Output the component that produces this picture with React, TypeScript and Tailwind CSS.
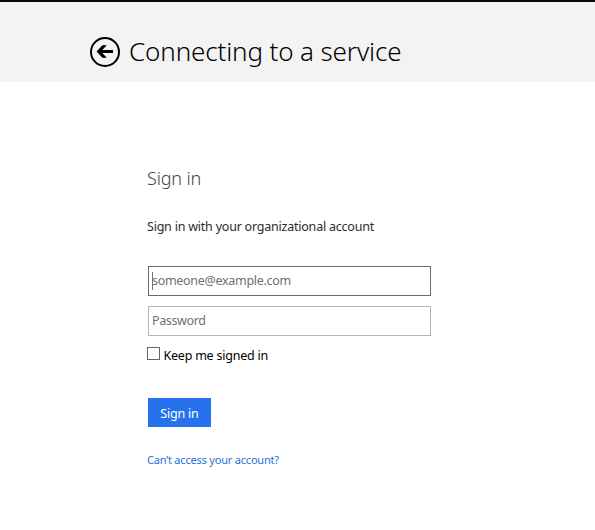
import { useState } from "react";

function BackIcon() {
  return (
    <svg width="30" height="30" viewBox="0 0 30 30" fill="none" aria-hidden="true">
      <circle cx="15" cy="15" r="14" stroke="#000" strokeWidth="2" />
      <path d="M6.6 14.5 L12.4 8.2 H16.8 L12.3 13 H23 V16 H12.3 L16.8 20.8 H12.4 Z" fill="#000" />
    </svg>
  );
}

export default function App() {
  const [keep, setKeep] = useState(false);
  return (
    <div className="h-[530px] w-full overflow-hidden bg-white font-['Noto_Sans','Open_Sans',sans-serif] text-[13px] text-black">
      <header className="flex h-[82px] items-start border-t-2 border-[#0d0a0b] bg-[#f3f3f3] pt-[30px] pl-[90px]">
        <button type="button" aria-label="Back" className="mt-[5px] h-[30px] w-[30px]">
          <BackIcon />
        </button>
        <h1 className="ml-[9px] text-[26px] leading-[38px] font-light tracking-[-0.13px] whitespace-nowrap">
          Connecting to a service
        </h1>
      </header>

      <main className="ml-[147px] flex w-[284px] flex-col items-start pt-[83px]">
        <h2 className="text-[18px] leading-[26px] font-light tracking-[-0.15px] text-[#444]">Sign in</h2>
        <p className="mt-[26px] text-[12.5px] leading-5 tracking-[-0.22px] whitespace-nowrap text-[#2b2b2b]">
          Sign in with your organizational account
        </p>
        <div className="mt-[29px] ml-px flex h-[30px] w-[283px] items-center border border-[#6b6b6b] pl-[3px]">
          <span className="h-[18px] w-px bg-[#777]" />
          <span className="-ml-px text-[12.5px] leading-5 tracking-[-0.3px] text-[#707070]">someone@example.com</span>
        </div>
        <div className="mt-[10px] ml-px flex h-[30px] w-[283px] items-center border border-[#b5b5b5] pl-[3px]">
          <span className="text-[12.5px] leading-5 tracking-[-0.37px] text-[#707070]">Password</span>
        </div>
        <label className="mt-[10px] flex h-5 items-start">
          <input
            type="checkbox"
            checked={keep}
            onChange={() => setKeep(!keep)}
            className="mt-px h-[13px] w-[13px] appearance-none border border-[#666] bg-white"
          />
          <span className="ml-[3.5px] text-[12.5px] leading-5 tracking-[-0.23px]">Keep me signed in</span>
        </label>
        <button type="button" className="mt-8 ml-px h-[29px] w-[63px] bg-[#2672ec] pt-[3px] text-[12.5px] tracking-[-0.2px] text-white">
          Sign in
        </button>
        <a
          href="#"
          className="mt-[23px] text-[11px] leading-5 tracking-[-0.2px] whitespace-nowrap text-[#2672dc]"
        >
          Can’t access your account?
        </a>
      </main>
    </div>
  );
}
